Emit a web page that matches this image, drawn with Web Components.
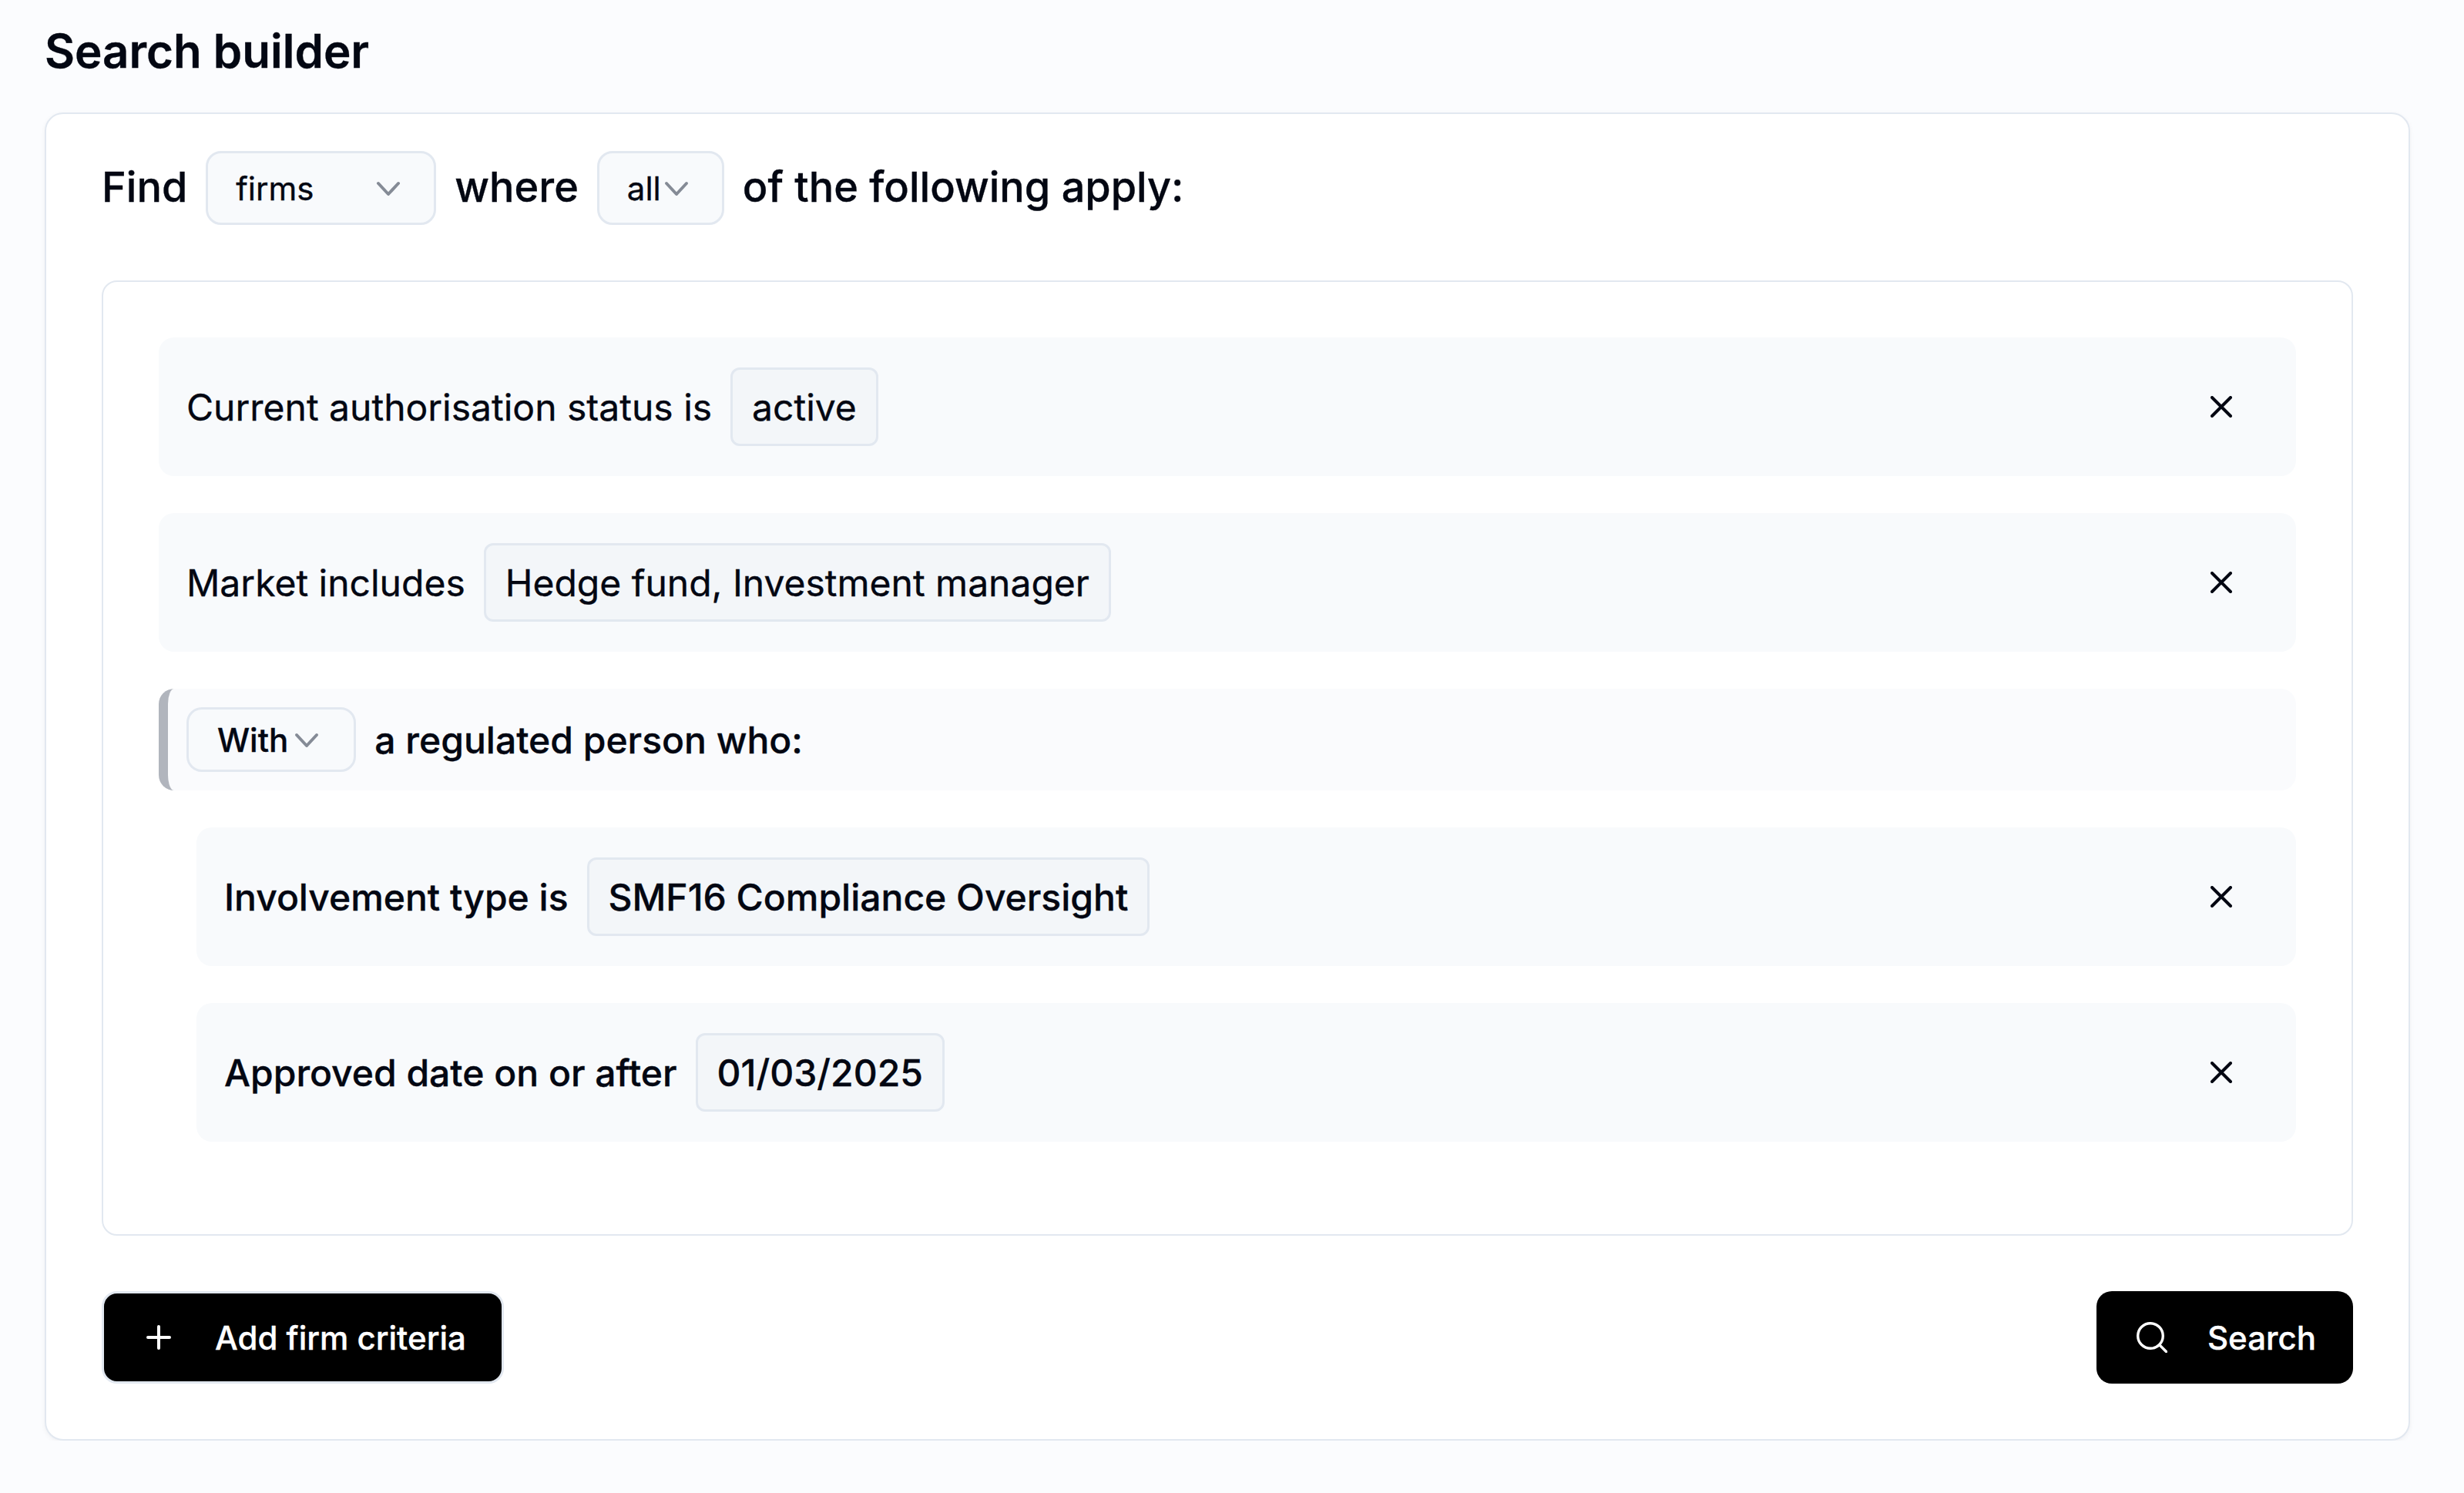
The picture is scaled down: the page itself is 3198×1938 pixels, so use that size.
<!DOCTYPE html>
<html lang="en">
<head>
<meta charset="utf-8">
<title>Search builder</title>
<style>
    html, body { margin: 0; background: #fbfcfe; }
    body { font-family: Inter, "Liberation Sans", sans-serif; color: #030712; -webkit-text-stroke: 0.35px currentColor; }
</style>
</head>
<body>
<search-page>
    <span slot="title">Search builder</span>
    <find-line></find-line>
    <criteria-row>Current authorisation status is <value-chip>active</value-chip></criteria-row>
    <criteria-row>Market includes <value-chip>Hedge fund, Investment manager</value-chip></criteria-row>
    <group-row>
        <pick-list label="With" size="small"></pick-list>
        <span>a regulated person who:</span>
    </group-row>
    <criteria-row nested>Involvement type is <value-chip>SMF16 Compliance Oversight</value-chip></criteria-row>
    <criteria-row nested>Approved date on or after <value-chip>01/03/2025</value-chip></criteria-row>
    <action-button slot="left" icon="plus" bordered>Add firm criteria</action-button>
    <action-button slot="right" icon="search">Search</action-button>
</search-page>

<script>
class SearchPage extends HTMLElement {
    constructor() {
        super();
        this.attachShadow({ mode: 'open' });
    }

    connectedCallback() {
        this.shadowRoot.innerHTML = `
            <style>
                :host { display: block; width: 3070px; padding: 0 70px 0 58px; }
                h1 { margin: 0; height: 146px; box-sizing: border-box; padding-top: 29px; font-size: 60px; line-height: 74px; font-weight: 600; color: #030712; }
                .card { background: #fff; border: 2px solid #e2e8f0; border-radius: 24px; padding: 48px 72px 72px; box-shadow: 0 2px 6px rgba(15, 23, 42, 0.05); }
                .panel { margin: 72px 0 72px; border: 2px solid #e2e8f0; border-radius: 20px; padding: 72px 72px 72px; }
                .panel ::slotted(:last-child) { margin-bottom: 0; }
                .actions { display: flex; justify-content: space-between; align-items: center; }
            </style>
            <h1><slot name="title"></slot></h1>
            <div class="card">
                <slot name="head"></slot>
                <div class="panel"><slot></slot></div>
                <div class="actions">
                    <slot name="left"></slot>
                    <slot name="right"></slot>
                </div>
            </div>
        `;
        const line = this.querySelector('find-line');
        if (line) line.slot = 'head';
    }
}

class FindLine extends HTMLElement {
    constructor() {
        super();
        this.attachShadow({ mode: 'open' });
    }

    connectedCallback() {
        this.shadowRoot.innerHTML = `
            <style>
                :host { display: flex; align-items: center; gap: 24px; height: 96px; font-size: 54px; font-weight: 500; }
                span { margin-top: -3px; }
            </style>
            <span>Find</span>
            <pick-list label="firms" width="299"></pick-list>
            <span>where</span>
            <pick-list label="all"></pick-list>
            <span>of the following apply:</span>
        `;
    }
}

class PickList extends HTMLElement {
    constructor() {
        super();
        this.attachShadow({ mode: 'open' });
    }

    connectedCallback() {
        const width = this.getAttribute('width');
        const small = this.getAttribute('size') === 'small';
        this.shadowRoot.innerHTML = `
            <style>
                :host { display: inline-flex; }
                .box { box-sizing: border-box; height: ${small ? 84 : 96}px; ${width ? `width: ${width}px;` : ''} display: flex; align-items: center; justify-content: space-between; gap: ${small ? 8 : 4}px; padding: 0 ${small ? 45 : 43}px 0 ${small ? 37 : 36}px; background: #f8fafc; border: 3px solid #e2e8f0; border-radius: 20px; font-size: 42px; font-weight: ${small ? 500 : 400}; }
                svg { width: 32px; height: 32px; flex: none; }
            </style>
            <div class="box">
                <span>${this.getAttribute('label')}</span>
                <svg viewBox="0 0 32 32" fill="none" stroke="#858b96" stroke-width="4" stroke-linecap="round" stroke-linejoin="round"><path d="M3 10l13 14 13-14"/></svg>
            </div>
        `;
    }
}

class ValueChip extends HTMLElement {
    constructor() {
        super();
        this.attachShadow({ mode: 'open' });
    }

    connectedCallback() {
        this.shadowRoot.innerHTML = `
            <style>
                :host { display: inline-flex; align-items: center; box-sizing: border-box; height: 102px; padding: 0 25px; margin-left: 24px; background: #f3f6f9; border: 3px solid #e2e8f0; border-radius: 12px; }
            </style>
            <slot></slot>
        `;
    }
}

class CriteriaRow extends HTMLElement {
    constructor() {
        super();
        this.attachShadow({ mode: 'open' });
    }

    connectedCallback() {
        this.shadowRoot.innerHTML = `
            <style>
                :host { display: flex; align-items: center; justify-content: space-between; box-sizing: border-box; height: 180px; margin-bottom: 48px; padding: 0 83px 0 36px; background: #f8fafc; border-radius: 20px; font-size: 48px; font-weight: 400; }
                :host([nested]) { margin-left: 49px; font-weight: 500; }
                .text { display: flex; align-items: center; }
                svg { width: 28px; height: 28px; flex: none; }
            </style>
            <div class="text"><slot></slot></div>
            <svg viewBox="0 0 28 28" fill="none" stroke="#030712" stroke-width="4" stroke-linecap="round"><path d="M2 2l24 24M26 2L2 26"/></svg>
        `;
    }
}

class GroupRow extends HTMLElement {
    constructor() {
        super();
        this.attachShadow({ mode: 'open' });
    }

    connectedCallback() {
        this.shadowRoot.innerHTML = `
            <style>
                :host { display: flex; align-items: center; gap: 24px; box-sizing: border-box; height: 132px; margin-bottom: 48px; padding: 0 24px; background: #fafbfd; border-left: 12px solid #b1b5bd; border-radius: 20px; font-size: 48px; font-weight: 500; }
            </style>
            <slot></slot>
        `;
    }
}

class ActionButton extends HTMLElement {
    constructor() {
        super();
        this.attachShadow({ mode: 'open' });
    }

    connectedCallback() {
        const icons = {
            plus: '<svg width="32" height="32" viewBox="0 0 32 32" fill="none" stroke="#fff" stroke-width="4" stroke-linecap="round"><path d="M16 2v28M2 16h28"/></svg>',
            search: '<svg width="40" height="40" viewBox="0 0 40 40" fill="none" stroke="#fff" stroke-width="3.4" stroke-linecap="round"><circle cx="18" cy="18" r="16.3"/><path d="M30 30l8.5 8.5"/></svg>'
        };
        this.shadowRoot.innerHTML = `
            <style>
                :host { display: inline-flex; }
                button { all: unset; box-sizing: border-box; display: flex; align-items: center; height: 120px; background: #000; color: #fff; border-radius: 20px; font: 500 42px Inter, "Liberation Sans", sans-serif; gap: 52px; padding: 0 48px 0 52px; }
                :host([bordered]) button { border: 3px solid #e2e8f0; border-radius: 20px; padding: 0 46px 0 55px; gap: 57px; }
            </style>
            <button>${icons[this.getAttribute('icon')]}<slot></slot></button>
        `;
    }
}

customElements.define('search-page', SearchPage);
customElements.define('find-line', FindLine);
customElements.define('pick-list', PickList);
customElements.define('value-chip', ValueChip);
customElements.define('criteria-row', CriteriaRow);
customElements.define('group-row', GroupRow);
customElements.define('action-button', ActionButton);
</script>
</body>
</html>
